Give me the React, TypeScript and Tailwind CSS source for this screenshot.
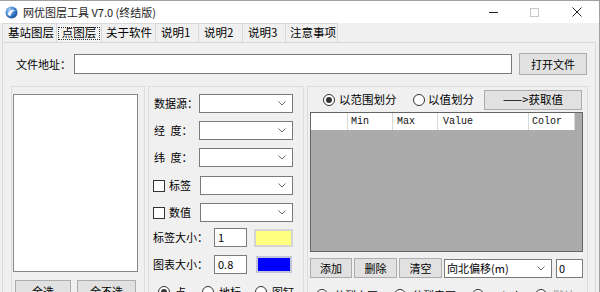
import React from "react";

const Chevron = () => (
  <svg width="8" height="5" viewBox="0 0 8 5" className="shrink-0">
    <path d="M0.5 0.5 L4 4 L7.5 0.5" fill="none" stroke="#6a6a6a" strokeWidth="1" />
  </svg>
);

const Combo = ({ className, text }: { className: string; text?: string }) => (
  <div className={"h-[19px] bg-white border border-[#7a7a7a] flex items-center justify-between pl-[2px] pr-[6px] shrink-0 " + className}>
    <span className="whitespace-nowrap">{text ?? ""}</span>
    <Chevron />
  </div>
);

const Radio = ({ checked }: { checked?: boolean }) => (
  <span className="w-[12px] h-[12px] rounded-full border border-[#333333] bg-white flex items-center justify-center shrink-0">
    {checked && <span className="w-[6px] h-[6px] rounded-full bg-[#333333]" />}
  </span>
);

const Check = () => <span className="w-[12px] h-[12px] border border-[#333333] bg-white shrink-0" />;

const Btn = ({ className, children }: { className: string; children: React.ReactNode }) => (
  <div className={"bg-[#e1e1e1] border border-[#adadad] flex items-center justify-center shrink-0 " + className}>{children}</div>
);

const AppIcon = () => (
  <svg width="13" height="13" viewBox="0 0 13 13">
    <defs>
      <radialGradient id="ig" cx="35%" cy="30%" r="75%">
        <stop offset="0" stopColor="#a8d0f4" />
        <stop offset="0.6" stopColor="#3b7fcc" />
        <stop offset="1" stopColor="#174c8e" />
      </radialGradient>
    </defs>
    <circle cx="6.5" cy="6.5" r="6" fill="url(#ig)" />
    <path d="M2.5 8.5 C3.5 4.5 7 3 10.5 4.5 C8 4.8 6 6.5 5.5 10.5 Z" fill="#ffffff" opacity="0.95" />
  </svg>
);

export default function App() {
  return (
    <div className="w-[600px] h-[292px] overflow-hidden bg-[#f0f0f0] flex flex-col border-t border-r border-[#a0a0a0] text-[11px] text-black leading-none font-['Microsoft_YaHei','Noto_Sans_CJK_SC',sans-serif]">
      {/* title bar */}
      <div className="h-[22px] bg-white flex items-center pl-[5px] shrink-0">
        <AppIcon />
        <span className="ml-[5px] text-[11px] text-[#222222] whitespace-nowrap">网优图层工具 V7.0 (终结版)</span>
        <div className="ml-auto flex h-full">
          <div className="w-[40px] flex items-center justify-center">
            <span className="w-[9px] h-px bg-[#222222]" />
          </div>
          <div className="w-[42px] flex items-center justify-center">
            <span className="w-[9px] h-[9px] border border-[#c8c8c8]" />
          </div>
          <div className="w-[44px] flex items-center justify-center">
            <svg width="10" height="10" viewBox="0 0 10 10">
              <path d="M0.5 0.5 L9.5 9.5 M9.5 0.5 L0.5 9.5" stroke="#222222" strokeWidth="1" />
            </svg>
          </div>
        </div>
      </div>

      {/* tabs */}
      <div className="h-[19px] flex pl-[2px] shrink-0 text-[11.5px]">
        <div className="w-[54px] h-full flex items-center pl-[5px] border-t border-l border-[#d9d9d9] whitespace-nowrap">基站图层</div>
        <div className="w-[46px] h-full flex items-center justify-center border-t border-l border-r border-[#d9d9d9] bg-[#f4f4f4]">
          <span className="border border-dotted border-[#333333] px-[3px] h-[13px] flex items-center whitespace-nowrap">点图层</span>
        </div>
        <div className="w-[54px] h-full flex items-center pl-[4px] border-t border-r border-[#d9d9d9] whitespace-nowrap">关于软件</div>
        <div className="w-[43px] h-full flex items-center pl-[5px] border-t border-r border-[#d9d9d9] whitespace-nowrap">说明1</div>
        <div className="w-[44px] h-full flex items-center pl-[5px] border-t border-r border-[#d9d9d9] whitespace-nowrap">说明2</div>
        <div className="w-[43px] h-full flex items-center pl-[5px] border-t border-r border-[#d9d9d9] whitespace-nowrap">说明3</div>
        <div className="w-[52px] h-full flex items-center pl-[4px] border-t border-r border-[#d9d9d9] whitespace-nowrap">注意事项</div>
      </div>

      {/* tab page */}
      <div className="ml-[2px] w-[594px] flex-1 border border-[#d9d9d9] bg-[#f0f0f0] flex flex-col">
        {/* file row */}
        <div className="mt-[10px] flex items-center h-[22px]">
          <span className="ml-[13px] w-[58px] whitespace-nowrap">文件地址：</span>
          <div className="w-[438px] h-[20px] bg-white border border-[#7a7a7a]" />
          <Btn className="ml-[7px] w-[68px] h-[22px]">打开文件</Btn>
        </div>

        {/* groups */}
        <div className="mt-[11px] flex items-start">
          {/* group 1 */}
          <div className="ml-[8px] w-[134px] h-[220px] border border-[#dcdcdc] flex flex-col">
            <div className="ml-[1px] mt-[7px] w-[125px] h-[178px] bg-white border border-[#828790]" />
            <div className="mt-[8px] ml-[3px] flex gap-[6px]">
              <Btn className="w-[56px] h-[22px]">全选</Btn>
              <Btn className="w-[59px] h-[22px]">全不选</Btn>
            </div>
          </div>

          {/* group 2 */}
          <div className="ml-[3px] w-[156px] h-[220px] border border-[#dcdcdc] flex flex-col pl-[4px]">
            <div className="mt-[7px] flex items-center">
              <span className="ml-[1px] w-[45px] whitespace-nowrap">数据源：</span>
              <Combo className="w-[94px]" />
            </div>
            <div className="mt-[8px] flex items-center">
              <span className="ml-[1px] w-[45px] whitespace-nowrap">经{"\u2002"}度：</span>
              <Combo className="w-[94px]" />
            </div>
            <div className="mt-[8px] flex items-center">
              <span className="ml-[1px] w-[45px] whitespace-nowrap">纬{"\u2002"}度：</span>
              <Combo className="w-[94px]" />
            </div>
            <div className="mt-[9px] flex items-center">
              <Check />
              <span className="ml-[4px] w-[31px] whitespace-nowrap">标签</span>
              <Combo className="w-[93px]" />
            </div>
            <div className="mt-[8px] flex items-center">
              <Check />
              <span className="ml-[4px] w-[31px] whitespace-nowrap">数值</span>
              <Combo className="w-[93px]" />
            </div>
            <div className="mt-[6px] flex items-center">
              <span className="w-[61px] whitespace-nowrap">标签大小：</span>
              <div className="w-[33px] h-[19px] bg-white border border-[#7a7a7a] flex items-center pl-[3px]">1</div>
              <div className="ml-[7px] w-[39px] h-[18px] bg-[#ffff80] border-2 border-[#d4d4d4]" />
            </div>
            <div className="mt-[8px] flex items-center">
              <span className="w-[61px] whitespace-nowrap">图表大小：</span>
              <div className="w-[33px] h-[19px] bg-white border border-[#7a7a7a] flex items-center pl-[3px]">0.8</div>
              <div className="ml-[9px] w-[36px] h-[17px] bg-[#0000ff] border-2 border-[#c4c4dc]" />
            </div>
            <div className="mt-[12px] flex items-center">
              <span className="ml-[5px]"><Radio checked /></span>
              <span className="ml-[5px] w-[27px]">点</span>
              <Radio />
              <span className="ml-[5px] w-[36px]">地标</span>
              <Radio />
              <span className="ml-[5px]">图钉</span>
            </div>
          </div>

          {/* group 3 */}
          <div className="ml-[3px] w-[281px] h-[220px] border border-[#dcdcdc] flex flex-col">
            <div className="mt-[3px] flex items-center h-[20px]">
              <span className="ml-[15px]"><Radio checked /></span>
              <span className="ml-[4px] w-[74px] text-[11.5px] whitespace-nowrap">以范围划分</span>
              <Radio />
              <span className="ml-[3px] w-[56px] text-[11.5px] whitespace-nowrap">以值划分</span>
              <Btn className="w-[98px] h-[20px] text-[11.5px]">——&gt;获取值</Btn>
            </div>
            <div className="mt-[2px] ml-[2px] w-[273px] h-[140px] border border-[#646464] bg-[#ababab]">
              <div className="flex h-[17px] font-['Liberation_Mono',monospace] text-[10px] font-medium text-[#111111]">
                <div className="w-[37px] h-full bg-white border-r border-[#d8d8d8]" />
                <div className="w-[45px] h-full bg-white border-r border-[#d8d8d8] flex items-center pl-[3px]">Min</div>
                <div className="w-[45px] h-full bg-white border-r border-[#d8d8d8] flex items-center pl-[4px]">Max</div>
                <div className="w-[91px] h-full bg-white border-r border-[#d8d8d8] flex items-center pl-[5px]">Value</div>
                <div className="w-[46px] h-full bg-white border-r border-[#d8d8d8] flex items-center pl-[3px]">Color</div>
              </div>
            </div>
            <div className="mt-[6px] ml-[2px] flex items-center gap-[2px]">
              <Btn className="w-[42px] h-[20px]">添加</Btn>
              <Btn className="w-[43px] h-[20px]">删除</Btn>
              <Btn className="w-[43px] h-[20px]">清空</Btn>
              <Combo className="w-[108px]" text="向北偏移(m)" />
              <div className="ml-[2px] w-[27px] h-[19px] bg-white border border-[#7a7a7a] flex items-center pl-[2px]">0</div>
            </div>
            <div className="mt-[11px] flex items-center">
              <span className="ml-[8px]"><Radio checked /></span>
              <span className="ml-[6px] w-[60px] whitespace-nowrap">分裂小区</span>
              <Radio />
              <span className="ml-[6px] w-[60px] whitespace-nowrap">分裂扇区</span>
              <Radio />
              <span className="ml-[6px] w-[45px] whitespace-nowrap">Label</span>
              <Radio />
              <span className="ml-[6px] text-[#9a9a9a] whitespace-nowrap">默认</span>
            </div>
          </div>
        </div>
      </div>
    </div>
  );
}
